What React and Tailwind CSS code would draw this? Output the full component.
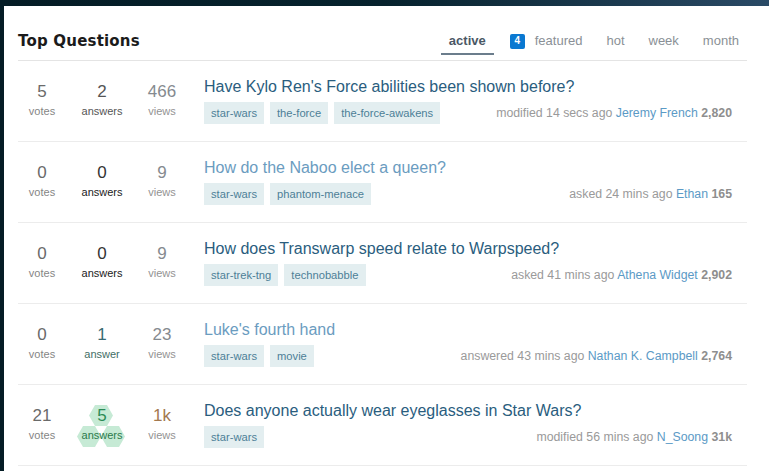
import React from 'react';

const QUESTIONS = [
  {
    id: 1, votes: '5', answers: '2', answerLabel: 'answers', views: '466',
    title: "Have Kylo Ren's Force abilities been shown before?", visited: false,
    tags: ['star-wars', 'the-force', 'the-force-awakens'],
    action: 'modified 14 secs ago', user: 'Jeremy French', rep: '2,820', answerState: 'some',
  },
  {
    id: 2, votes: '0', answers: '0', answerLabel: 'answers', views: '9',
    title: 'How do the Naboo elect a queen?', visited: true,
    tags: ['star-wars', 'phantom-menace'],
    action: 'asked 24 mins ago', user: 'Ethan', rep: '165', answerState: 'none',
  },
  {
    id: 3, votes: '0', answers: '0', answerLabel: 'answers', views: '9',
    title: 'How does Transwarp speed relate to Warpspeed?', visited: false,
    tags: ['star-trek-tng', 'technobabble'],
    action: 'asked 41 mins ago', user: 'Athena Widget', rep: '2,902', answerState: 'none',
  },
  {
    id: 4, votes: '0', answers: '1', answerLabel: 'answer', views: '23',
    title: "Luke's fourth hand", visited: true,
    tags: ['star-wars', 'movie'],
    action: 'answered 43 mins ago', user: 'Nathan K. Campbell', rep: '2,764', answerState: 'one',
  },
  {
    id: 5, votes: '21', answers: '5', answerLabel: 'answers', views: '1k',
    title: 'Does anyone actually wear eyeglasses in Star Wars?', visited: false,
    tags: ['star-wars'],
    action: 'modified 56 mins ago', user: 'N_Soong', rep: '31k', answerState: 'accepted', hot: true,
  },
];

function Hex({ x, y, w, h }) {
  const q = w / 4;
  const pts = `${x + q},${y} ${x + w - q},${y} ${x + w},${y + h / 2} ${x + w - q},${y + h} ${x + q},${y + h} ${x},${y + h / 2}`;
  return <polygon points={pts} fill="#c6ead5" />;
}

function AnswerStat({ q }) {
  if (q.answerState === 'accepted') {
    return (
      <div className="relative w-[48px] flex flex-col items-center">
        <svg className="absolute left-[-2px] top-[0px]" width="52" height="46" viewBox="0 0 52 46">
          <Hex x={13} y={0} w={24} h={21} />
          <Hex x={1} y={21} w={24} h={21} />
          <Hex x={25} y={21} w={24} h={21} />
        </svg>
        <span className="relative text-[17px] leading-[22px] text-[#2b8a55]">{q.answers}</span>
        <span className="relative text-[11px] leading-[16px] text-[#2b7a4b]">{q.answerLabel}</span>
      </div>
    );
  }
  const numColor = q.answerState === 'one' ? 'text-[#3a6a72]' : q.answerState === 'some' ? 'text-[#555]' : 'text-[#333]';
  const labelColor = q.answerState === 'one' ? 'text-[#3f6e66]' : q.answerState === 'some' ? 'text-[#555]' : 'text-[#222]';
  return (
    <div className="w-[48px] flex flex-col items-center">
      <span className={`text-[17px] leading-[22px] ${numColor}`}>{q.answers}</span>
      <span className={`text-[11px] leading-[16px] ${labelColor}`}>{q.answerLabel}</span>
    </div>
  );
}

function QuestionRow({ q }) {
  return (
    <div className="flex border-b border-[#ececec] h-[81px] pr-[15px]">
      <div className="flex gap-[12px] pt-[20px]">
        <div className="w-[48px] flex flex-col items-center">
          <span className="text-[17px] leading-[22px] text-[#6a6a6a]">{q.votes}</span>
          <span className="text-[11px] leading-[16px] text-[#858585]">votes</span>
        </div>
        <AnswerStat q={q} />
        <div className="w-[48px] flex flex-col items-center">
          <span className={`text-[17px] leading-[22px] ${q.hot ? 'text-[#a3784f]' : 'text-[#858a8f]'}`}>{q.views}</span>
          <span className="text-[11px] leading-[16px] text-[#939393]">views</span>
        </div>
      </div>
      <div className="flex-1 ml-[18px] pt-[16px]">
        <div className={`text-[16px] leading-[20px] ${q.visited ? 'text-[#6b9cbf]' : 'text-[#2a5d7e]'}`}>{q.title}</div>
        <div className="flex items-center mt-[5px]">
          <div className="flex gap-[6px]">
            {q.tags.map((t) => (
              <span key={t} className="bg-[#e3eef0] text-[#4d7f97] text-[11.2px] leading-[22px] px-[7px]">{t}</span>
            ))}
          </div>
          <div className="ml-auto text-[12.3px] leading-[22px] text-[#9a9a9a]">
            {q.action} <span className="text-[#5b9ac6]">{q.user}</span>{' '}
            <span className="font-bold text-[#8e8e8e]">{q.rep}</span>
          </div>
        </div>
      </div>
    </div>
  );
}

export default function App() {
  return (
    <div
      className="w-[769px] h-[471px] overflow-hidden pt-[6px] pl-[4px] bg-gradient-to-r from-[#041c25] via-[#06222d] to-[#2a4a66]"
      style={{ fontFamily: '"Liberation Sans", Arial, sans-serif' }}
    >
      <div className="bg-white h-full pl-[14px]">
        <div className="w-[729px]">
          {/* header */}
          <div className="flex items-end h-[55px] border-b border-[#e4e4e4]">
            <h1
              className="text-[15px] leading-[20px] font-bold text-[#1b1b1b] tracking-[0.2px] pb-[9px]"
              style={{ fontFamily: '"DejaVu Sans", sans-serif' }}
            >
              Top Questions
            </h1>
            <div className="ml-auto flex gap-[8px] text-[13px] leading-[16px] text-[#8a9096] pb-[5px]">
              <div className="px-[8px] pb-[4px] text-[#4a5866] font-bold border-b-2 border-[#6b7d8c]">active</div>
              <div className="px-[8px] pb-[4px] border-b-2 border-transparent flex items-center">
                <span className="bg-[#0a78d1] text-white text-[10px] leading-none font-bold w-[15px] h-[15px] rounded-[2px] flex items-center justify-center mr-[10px]">4</span>
                featured
              </div>
              <div className="px-[8px] pb-[4px] border-b-2 border-transparent">hot</div>
              <div className="px-[8px] pb-[4px] border-b-2 border-transparent">week</div>
              <div className="px-[8px] pb-[4px] border-b-2 border-transparent">month</div>
            </div>
          </div>
          {QUESTIONS.map((q) => (
            <QuestionRow key={q.id} q={q} />
          ))}
        </div>
      </div>
    </div>
  );
}
